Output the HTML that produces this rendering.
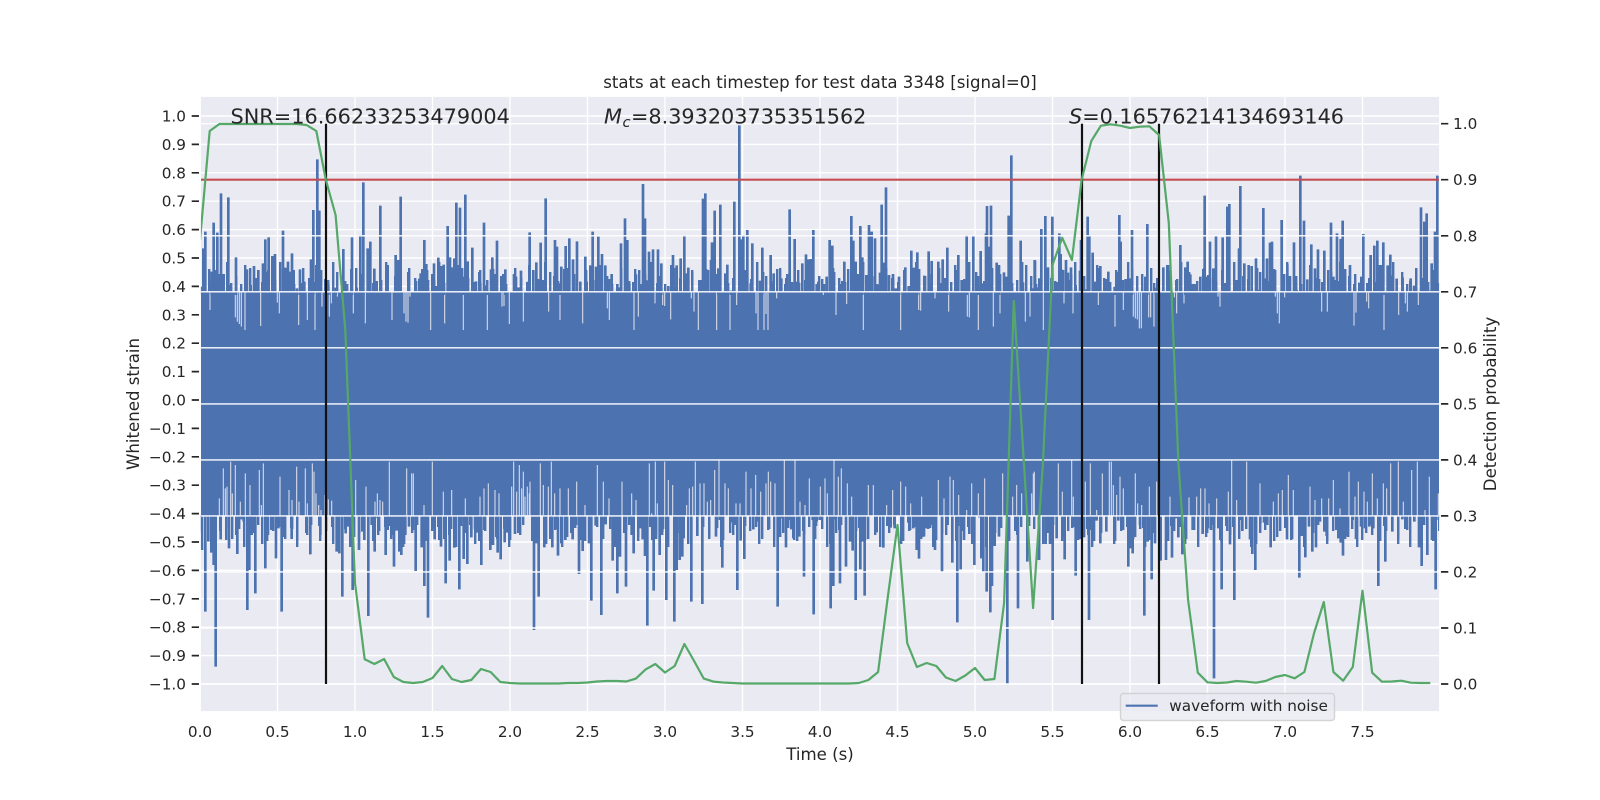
<!DOCTYPE html>
<html>
<head>
<meta charset="utf-8">
<title>stats</title>
<style>
html,body{margin:0;padding:0;background:#fff;width:1600px;height:800px;overflow:hidden}
svg{display:block}
text{font-family:"DejaVu Sans","Liberation Sans",sans-serif;fill:#262626}
.t{font-size:15.28px}
.l{font-size:16.6px}
.b{font-size:20.78px}
.blue{fill:none;stroke:#4C72B0;stroke-width:8}
.dip{fill:none;stroke:#EAEAF2;stroke-width:3.4;stroke-opacity:.85}
</style>
</head>
<body>
<svg width="1600" height="800" viewBox="0 0 1600 800" xmlns="http://www.w3.org/2000/svg">
<defs>
<clipPath id="c"><rect x="200.9" y="96.9" width="1238.2" height="614.2"/></clipPath>
<pattern id="pa" patternUnits="userSpaceOnUse" x="0" y="250" width="53" height="44">
<g fill="#4C72B0"><rect x="2" y="20" width="2.4" height="24"/><rect x="9" y="30" width="2.4" height="14"/><rect x="14" y="12" width="2.4" height="32"/><rect x="23" y="26" width="2.4" height="18"/><rect x="28" y="34" width="2.4" height="10"/><rect x="37" y="18" width="2.4" height="26"/><rect x="43" y="28" width="2.4" height="16"/><rect x="49" y="32" width="2.4" height="12"/></g>
</pattern>
<pattern id="pb" patternUnits="userSpaceOnUse" x="0" y="250" width="71" height="44">
<g fill="#4C72B0"><rect x="5" y="24" width="2.4" height="20"/><rect x="17" y="33" width="2.4" height="11"/><rect x="31" y="15" width="2.4" height="29"/><rect x="40" y="29" width="2.4" height="15"/><rect x="52" y="22" width="2.4" height="22"/><rect x="60" y="31" width="2.4" height="13"/><rect x="66" y="19" width="2.4" height="25"/></g>
</pattern>
</defs>
<rect width="1600" height="800" fill="#fff"/>
<rect x="200.9" y="96.9" width="1238.2" height="614.2" fill="#EAEAF2"/>

<!-- grid under the data -->
<path fill="none" stroke="#fff" stroke-width="1.39" d="M277.5 97V711M355 97V711M432.5 97V711M510 97V711M587.5 97V711M665 97V711M742.5 97V711M820 97V711M897.5 97V711M975 97V711M1052.5 97V711M1130 97V711M1207.5 97V711M1285 97V711M1362.5 97V711M201 116H1439M201 144.4H1439M201 172.8H1439M201 201.2H1439M201 229.6H1439M201 258H1439M201 286.4H1439M201 314.8H1439M201 343.2H1439M201 371.6H1439M201 400H1439M201 428.4H1439M201 456.8H1439M201 485.2H1439M201 513.6H1439M201 542H1439M201 570.4H1439M201 598.8H1439M201 627.2H1439M201 655.6H1439M201 684H1439"/>

<g clip-path="url(#c)">
<rect x="201" y="292.5" width="1238" height="224" fill="#4C72B0"/>
<!-- dense low columns just outside the solid band -->
<rect x="180" y="250" width="1280" height="44" fill="url(#pa)"/>
<rect x="180" y="250" width="1280" height="44" fill="url(#pb)"/>
<g transform="translate(17,809) scale(1,-1)">
<rect x="160" y="250" width="1280" height="44" fill="url(#pa)"/>
<rect x="160" y="250" width="1280" height="44" fill="url(#pb)"/>
</g>

<!-- top band, part 1 -->
<g transform="translate(200,180) scale(.33333)">
<path class="dip" d="M30 338V390M106 338V412M112 338V425M118 338V432M124 338V440M135 338V450M182 338V438M232 338V368M238 338V400M296 338V435M322 338V420M345 338V450M366 338V380M388 338V410M394 338V370M412 338V350M460 338V400M496 338V430M576 338V420M612 338V400M618 338V425M624 338V428M630 338V350M692 338V450M734 338V430M790 338V450M862 338V450M906 338V380M912 338V378M928 338V432M970 338V425M1046 338V395M1080 338V420M1148 338V430M1222 338V385M1228 338V420"/>
<path class="blue" d="M3 320V345M10 205V345M16 155V345M35 275V345M41 128V345M52 158V345M63 40V345M71 282V345M85 52V345M92 315V345M108 232V345M141 268V345M152 315V345M162 258V345M167 310V345M175 270V345M189 250V345M196 178V345M206 172V345M217 228V345M225 222V345M249 152V345M256 263V345M264 245V345M269 275V345M276 220V345M281 270V345M291 325V345M300 268V345M313 305V345M333 238V345M340 90V345M352 -62V345M358 92V345M385 314V345M407 323V345M430 207V345M456 172V345M470 323V345M481 165V345M490 7V345M503 205V345M511 185V345M523 266V345M530 303V345M541 77V345M563 255V345M587 225V345M594 240V345M602 50V345M658 296V345M662 280V345M673 180V345M679 252V345M684 300V345M702 250V345M708 318V345M715 233V345M723 258V345M731 254V345M743 138V345M750 232V345M757 262V345M763 235V345M769 68V345M780 83V345M789 290V345M796 44V345M803 244V345M817 203V345M828 304V345M841 310V345M852 128V345M860 316V345M873 268V345M877 232V345M883 282V345M891 182V345M916 268V345M942 282V345M948 290V345M955 322V345M963 272V345M985 305V345M989 157V345M1000 271V345M1009 247V345M1022 188V345M1030 300V345M1037 55V345M1065 180V345M1071 200V345M1077 310V345M1084 260V345M1097 198V345M1108 175V345M1119 238V345M1131 184V345M1141 305V345M1156 230V345M1160 305V345M1171 256V345M1178 155V345M1188 260V345M1195 170V345M1206 222V345M1216 256V345M1235 282V345M1252 312V345M1258 322V345"/>
</g>

<!-- top band, part 2 -->
<g transform="translate(620,180) scale(.33333)">
<path class="dip" d="M42 338V450M55 338V410M105 338V370M128 338V375M134 338V378M152 338V418M214 338V355M222 338V395M235 338V450M290 338V450M330 338V450M350 338V375M408 338V400M414 338V450M432 338V450M438 338V402M444 338V450M470 338V355M610 338V345M648 338V405M680 338V372M730 338V450M842 338V450M896 338V390M902 338V392M945 338V355M986 338V395M1042 338V410M1048 338V412M1075 338V450M1120 338V440M1140 338V400M1216 338V425M1230 338V410"/>
<path class="blue" d="M3 190V345M15 115V345M22 180V345M28 310V345M48 283V345M63 312V345M69 12V345M75 115V345M80 303V345M87 215V345M93 295V345M99 208V345M114 208V345M124 250V345M145 318V345M159 225V345M164 320V345M170 256V345M182 235V345M193 165V345M198 280V345M205 263V345M241 300V345M249 56V345M256 40V345M264 270V345M273 240V345M276 187V345M284 92V345M295 265V345M301 74V345M316 280V345M322 254V345M333 332V345M343 65V345M358 -164V345M364 178V345M370 165V345M382 150V345M392 310V345M397 190V345M420 302V345M427 203V345M452 225V345M461 280V345M484 295V345M496 312V345M509 88V345M524 177V345M531 305V345M535 305V345M547 250V345M558 223V345M564 238V345M572 237V345M580 150V345M590 312V345M595 305V345M620 290V345M629 180V345M637 197V345M662 312V345M673 245V345M694 108V345M700 182V345M707 245V345M721 138V345M727 232V345M739 285V345M747 135V345M755 155V345M765 175V345M773 315V345M780 278V345M785 74V345M791 248V345M798 22V345M807 285V345M819 282V345M827 325V345M837 290V345M856 262V345M866 318V345M874 212V345M881 263V345M892 217V345M913 287V345M926 214V345M935 243V345M955 245V345M968 238V345M982 203V345M1008 288V345M1015 225V345M1025 300V345M1032 330V345M1040 165V345M1060 168V345M1074 323V345M1082 213V345M1090 310V345M1098 160V345M1101 78V345M1108 200V345M1113 77V345M1130 248V345M1137 255V345M1152 277V345M1158 290V345M1166 107V345M1174 -74V345M1202 182V345M1209 307V345M1240 325V345M1245 242V345M1258 295V345"/>
</g>

<!-- top band, part 3 -->
<g transform="translate(1030,180) scale(.33333)">
<path class="dip" d="M40 338V450M102 338V370M129 338V400M205 338V375M255 338V440M280 338V390M310 338V410M316 338V415M322 338V418M328 338V445M334 338V445M356 338V412M362 338V412M372 338V440M433 338V352M440 338V400M462 338V370M564 338V350M570 338V380M736 338V350M742 338V400M748 338V430M764 338V352M875 338V395M892 338V395M972 338V437M978 338V398M1010 338V365M1016 338V385M1062 338V450M1106 338V405M1126 338V370M1132 338V395M1165 338V375"/>
<path class="blue" d="M8 325V345M14 240V345M20 322V345M30 295V345M34 147V345M46 108V345M54 262V345M67 110V345M75 330V345M88 160V345M92 222V345M108 240V345M114 278V345M123 262V345M137 315V345M150 272V345M153 180V345M165 328V345M173 110V345M178 165V345M188 218V345M195 305V345M211 258V345M235 275V345M240 322V345M254 320V345M268 105V345M272 185V345M287 297V345M300 295V345M306 150V345M346 290V345M352 132V345M377 323V345M400 262V345M412 255V345M451 195V345M466 262V345M473 245V345M481 283V345M488 312V345M511 290V345M524 47V345M528 290V345M535 285V345M540 185V345M550 265V345M558 168V345M578 172V345M592 80V345M598 72V345M619 300V345M627 205V345M631 18V345M643 250V345M656 255V345M665 258V345M678 235V345M685 330V345M700 84V345M706 295V345M711 235V345M720 188V345M726 185V345M755 120V345M772 253V345M780 288V345M792 187V345M800 330V345M811 -13V345M822 122V345M832 298V345M844 193V345M855 265V345M864 208V345M883 212V345M903 128V345M910 290V345M921 160V345M932 177V345M938 122V345M945 283V345M960 255V345M988 308V345M994 290V345M1000 162V345M1022 225V345M1033 197V345M1042 182V345M1050 255V345M1060 187V345M1073 256V345M1081 224V345M1086 287V345M1100 296V345M1118 293V345M1142 295V345M1152 317V345M1173 82V345M1183 125V345M1190 100V345M1197 332V345M1205 250V345M1215 155V345M1222 -13V345"/>
</g>

<!-- bottom band, part 1 -->
<g transform="translate(200,460) scale(.33333)">
<path class="dip" d="M58 115V170M70 25V170M76 85V170M81 80V170M92 5V170M97 100V170M106 15V170M121 125V170M136 40V170M150 75V170M178 30V170M184 135V170M190 10V170M240 50V170M267 90V170M276 120V170M290 20V170M297 125V170M316 25V170M322 130V170M337 10V170M342 35V170M348 100V170M356 135V170M363 150V170M375 105V170M385 118V170M395 122V170M400 165V170M467 60V170M498 80V170M525 125V170M532 100V170M540 120V170M548 125V170M568 5V170M620 25V170M635 40V170M640 40V170M672 135V170M697 5V170M730 95V170M755 90V170M796 115V170M840 110V170M852 85V170M865 70V170M885 90V170M897 100V170M935 80V170M941 5V170M950 95V170M958 15V170M965 85V170M970 35V170M975 110V170M982 80V170M988 100V170M990 65V170M1021 10V170M1030 75V170M1045 80V170M1054 5V170M1064 100V170M1080 85V170M1105 85V170M1130 65V170M1155 135V170M1192 15V170M1210 65V170M1227 115V170"/>
<path class="blue" d="M6 165V270M16 165V455M25 165V245M34 165V278M41 165V315M47 165V620M62 165V238M87 165V265M112 165V282M125 165V178M131 165V185M142 165V450M148 165V330M155 165V225M166 165V400M196 165V325M204 165V225M215 165V205M228 165V295M235 165V205M245 165V455M252 165V180M275 165V237M331 165V283M361 165V225M410 165V275M418 165V280M427 165V410M437 165V220M445 165V200M458 165V390M477 165V270M487 165V215M493 165V240M505 165V468M515 165V195M524 165V275M533 165V175M557 165V285M563 165V210M574 165V225M582 165V320M590 165V212M598 165V275M604 165V285M616 165V225M627 165V200M647 165V333M665 165V262M673 165V378M684 165V473M704 165V238M723 165V260M737 165V370M749 165V302M763 165V263M778 165V388M791 165V297M802 165V312M814 165V232M825 165V208M830 165V218M844 165V315M871 165V270M879 165V255M893 165V278M902 165V298M914 165V247M922 165V218M929 165V198M945 165V222M1002 165V510M1008 165V250M1016 165V410M1033 165V262M1057 165V262M1074 165V287M1084 165V250M1096 165V240M1118 165V238M1137 165V342M1148 165V273M1167 165V250M1174 165V422M1187 165V197M1204 165V465M1217 165V193M1238 165V302M1252 165V400M1258 165V290"/>
</g>

<!-- bottom band, part 2 -->
<g transform="translate(620,460) scale(.33333)">
<path class="dip" d="M6 65V170M35 100V170M48 120V170M88 10V170M95 160V170M106 5V170M112 130V170M134 5V170M145 60V170M158 75V170M188 165V170M200 135V170M208 85V170M218 80V170M226 5V170M240 70V170M252 70V170M262 125V170M272 120V170M284 30V170M297 0V170M315 70V170M325 85V170M348 130V170M360 130V170M378 35V170M393 85V170M407 45V170M422 95V170M438 70V170M445 35V170M452 65V170M465 70V170M493 0V170M525 0V170M540 125V170M555 135V170M568 55V170M601 80V170M615 55V170M622 100V170M642 0V170M655 50V170M664 25V170M682 70V170M695 110V170M745 75V170M760 75V170M800 135V170M818 90V170M842 65V170M857 80V170M872 130V170M905 110V170M955 60V170M972 115V170M990 50V170M1000 60V170M1016 105V170M1040 150V170M1055 70V170M1075 100V170M1094 55V170M1148 40V170M1178 110V170M1190 75V170M1205 100V170M1240 40V170"/>
<path class="blue" d="M0 165V290M18 165V380M28 165V178M35 165V225M41 165V280M62 165V205M68 165V238M75 165V288M82 165V497M101 165V392M108 165V220M119 165V285M127 165V215M139 165V420M163 165V485M170 165V330M179 165V300M187 165V290M191 165V235M214 165V425M232 165V228M247 165V432M288 165V230M300 165V180M307 165V323M333 165V187M340 165V175M352 165V390M362 165V242M373 165V297M400 165V208M412 165V185M473 165V440M479 165V218M485 165V175M498 165V262M508 165V180M514 165V208M520 165V235M538 165V230M552 165V350M578 165V180M581 165V463M590 165V185M599 165V180M632 165V445M640 165V378M648 165V178M660 165V370M678 165V320M690 165V245M698 165V272M707 165V420M721 165V328M727 165V245M734 165V407M770 165V217M790 165V263M812 165V203M824 165V205M845 165V175M865 165V188M880 165V205M890 165V270M897 165V296M912 165V230M918 165V205M930 165V193M938 165V195M945 165V270M966 165V335M983 165V195M997 165V308M1012 165V487M1022 165V328M1032 165V240M1048 165V222M1063 165V315M1078 165V172M1084 165V295M1090 165V335M1100 165V395M1111 165V457M1116 165V378M1124 165V258M1137 165V230M1152 165V170M1162 165V672M1194 165V445M1222 165V305M1257 165V300"/>
</g>

<!-- bottom band, part 3 -->
<g transform="translate(1030,460) scale(.33333)">
<path class="dip" d="M5 100V170M13 35V170M85 10V170M97 95V170M125 0V170M130 110V170M166 65V170M181 10V170M200 150V170M217 40V170M238 5V170M244 5V170M250 75V170M260 105V170M270 50V170M280 85V170M316 40V170M323 130V170M335 135V170M358 80V170M380 65V170M420 110V170M477 112V170M500 110V170M512 85V170M525 85V170M537 130V170M560 115V170M595 95V170M605 0V170M620 120V170M650 5V170M690 70V170M730 125V170M745 100V170M757 90V170M775 45V170M790 90V170M840 80V170M855 120V170M875 115V170M896 115V170M910 60V170M930 145V170M957 35V170M975 110V170M985 65V170M1002 95V170M1012 125V170M1027 40V170M1042 115V170M1060 70V170M1070 85V170M1082 10V170M1105 5V170M1120 125V170M1145 30V170M1162 5V170M1185 150V170M1198 50V170M1225 100V170"/>
<path class="blue" d="M27 165V298M47 165V252M60 165V252M68 165V480M80 165V235M104 165V298M124 165V170M137 165V347M145 165V210M162 165V232M177 165V480M185 165V210M192 165V243M200 165V182M211 165V250M229 165V215M265 165V182M295 165V320M302 165V265M308 165V280M330 165V195M343 165V467M353 165V245M365 165V358M375 165V250M392 165V302M408 165V300M426 165V293M437 165V175M445 165V232M457 165V283M488 165V210M518 165V222M534 165V205M543 165V210M552 165V655M565 165V205M575 165V388M589 165V198M600 165V253M613 165V420M630 165V180M637 165V213M660 165V238M667 165V282M676 165V330M691 165V190M702 165V188M712 165V195M722 165V262M771 165V238M808 165V353M815 165V228M826 165V292M837 165V200M847 165V275M858 165V262M870 165V185M883 165V215M890 165V228M925 165V235M932 165V248M939 165V287M947 165V230M968 165V180M978 165V237M993 165V200M1005 165V205M1018 165V200M1030 165V205M1045 165V378M1066 165V305M1087 165V215M1117 165V178M1127 165V203M1153 165V185M1167 165V262M1175 165V318M1192 165V285M1206 165V240M1217 165V388M1226 165V180"/>
</g>

<!-- grid of the twin axis, over the waveform -->
<path fill="none" stroke="#fff" stroke-width="1.39" d="M201 123.7H1439M201 179.7H1439M201 235.8H1439M201 291.8H1439M201 347.8H1439M201 403.9H1439M201 459.9H1439M201 515.9H1439M201 571.9H1439M201 628H1439M201 684H1439"/>
<!-- threshold -->
<path fill="none" stroke="#C44E52" stroke-width="2.2" d="M201 179.7H1439"/>
<!-- event markers -->
<path fill="none" stroke="#111" stroke-width="2.2" d="M326 123.7V684M1082 123.7V684M1159 123.7V684"/>
<!-- detection probability -->
<polyline fill="none" stroke="#55A868" stroke-width="2.2" stroke-linejoin="round" points="200,240 209.7,131 219.4,124 229.1,124 238.8,124 248.4,124 258.1,124 267.8,124 277.5,124 287.2,124 296.9,124 306.6,125 316.3,131 325.9,180 335.6,215 345.3,330 355,583 364.7,659.3 374.4,664 384.1,659 393.8,677 403.4,682 413.1,683 422.8,682 432.5,678 442.2,666 451.9,679 461.6,682 471.3,680 480.9,669 490.6,672 500.3,682 510,683 519.7,683.5 529.4,683.5 539.1,683.5 548.8,683.5 558.4,683.5 568.1,683 577.8,683 587.5,682.5 597.2,681.5 606.9,681 616.6,681 626.3,681.5 635.9,678.6 645.6,669.4 655.3,664 665,672.5 674.7,666 684.4,644 694.1,661 703.8,678.6 713.4,681.6 723.1,682.5 732.8,683 742.5,683.5 752.2,683.5 761.9,683.5 771.6,683.5 781.3,683.5 790.9,683.5 800.6,683.5 810.3,683.5 820,683.5 829.7,683.5 839.4,683.5 849.1,683.5 858.8,683 868.4,680 878.1,672 887.8,597 897.5,525 907.2,643 916.9,667 926.6,663 936.3,666 945.9,677.5 955.6,681 965.3,675.5 975,668 984.7,680 994.4,679 1004.1,603 1013.8,301 1023.4,455 1033.1,608 1042.8,465 1052.5,265 1062.2,237.7 1071.9,260 1081.6,180 1091.3,141 1100.9,125.7 1110.6,124.3 1120.3,125.7 1130,128 1139.7,126.7 1149.4,126.3 1159.1,135 1168.8,223 1178.4,463 1188.1,600 1197.8,672.7 1207.5,682.3 1217.2,683 1226.9,682.5 1236.6,681 1246.3,681.7 1255.9,682.7 1265.6,681 1275.3,677 1285,675 1294.7,678.3 1304.4,672 1314.1,633 1323.8,602 1333.4,672 1343.1,680.7 1352.8,667 1362.5,590.7 1372.2,672.7 1381.9,681.7 1391.6,681.5 1401.3,680.7 1410.9,682.7 1420.6,683 1430.3,683"/>
</g>

<!-- ticks -->
<path fill="none" stroke="#262626" stroke-width="1.7" d="M191.7 116H199M191.7 144.4H199M191.7 172.8H199M191.7 201.2H199M191.7 229.6H199M191.7 258H199M191.7 286.4H199M191.7 314.8H199M191.7 343.2H199M191.7 371.6H199M191.7 400H199M191.7 428.4H199M191.7 456.8H199M191.7 485.2H199M191.7 513.6H199M191.7 542H199M191.7 570.4H199M191.7 598.8H199M191.7 627.2H199M191.7 655.6H199M191.7 684H199M1441 123.7H1448.3M1441 179.7H1448.3M1441 235.8H1448.3M1441 291.8H1448.3M1441 347.8H1448.3M1441 403.9H1448.3M1441 459.9H1448.3M1441 515.9H1448.3M1441 571.9H1448.3M1441 628H1448.3M1441 684H1448.3"/>

<!-- left tick labels -->
<g text-anchor="end">
<text class="t" x="186" y="121.5">1.0</text>
<text class="t" x="186" y="149.9">0.9</text>
<text class="t" x="186" y="178.3">0.8</text>
<text class="t" x="186" y="206.7">0.7</text>
<text class="t" x="186" y="235.1">0.6</text>
<text class="t" x="186" y="263.5">0.5</text>
<text class="t" x="186" y="291.9">0.4</text>
<text class="t" x="186" y="320.3">0.3</text>
<text class="t" x="186" y="348.7">0.2</text>
<text class="t" x="186" y="377.1">0.1</text>
<text class="t" x="186" y="405.5">0.0</text>
<text class="t" x="186" y="433.9">−0.1</text>
<text class="t" x="186" y="462.3">−0.2</text>
<text class="t" x="186" y="490.7">−0.3</text>
<text class="t" x="186" y="519.1">−0.4</text>
<text class="t" x="186" y="547.5">−0.5</text>
<text class="t" x="186" y="575.9">−0.6</text>
<text class="t" x="186" y="604.3">−0.7</text>
<text class="t" x="186" y="632.7">−0.8</text>
<text class="t" x="186" y="661.1">−0.9</text>
<text class="t" x="186" y="689.5">−1.0</text>
</g>

<!-- right tick labels -->
<g>
<text class="t" x="1453" y="129.2">1.0</text>
<text class="t" x="1453" y="185.2">0.9</text>
<text class="t" x="1453" y="241.3">0.8</text>
<text class="t" x="1453" y="297.3">0.7</text>
<text class="t" x="1453" y="353.3">0.6</text>
<text class="t" x="1453" y="409.4">0.5</text>
<text class="t" x="1453" y="465.4">0.4</text>
<text class="t" x="1453" y="521.4">0.3</text>
<text class="t" x="1453" y="577.4">0.2</text>
<text class="t" x="1453" y="633.5">0.1</text>
<text class="t" x="1453" y="689.5">0.0</text>
</g>

<!-- bottom tick labels -->
<g text-anchor="middle">
<text class="t" x="200" y="737">0.0</text>
<text class="t" x="277.5" y="737">0.5</text>
<text class="t" x="355" y="737">1.0</text>
<text class="t" x="432.5" y="737">1.5</text>
<text class="t" x="510" y="737">2.0</text>
<text class="t" x="587.5" y="737">2.5</text>
<text class="t" x="665" y="737">3.0</text>
<text class="t" x="742.5" y="737">3.5</text>
<text class="t" x="820" y="737">4.0</text>
<text class="t" x="897.5" y="737">4.5</text>
<text class="t" x="975" y="737">5.0</text>
<text class="t" x="1052.5" y="737">5.5</text>
<text class="t" x="1130" y="737">6.0</text>
<text class="t" x="1207.5" y="737">6.5</text>
<text class="t" x="1285" y="737">7.0</text>
<text class="t" x="1362.5" y="737">7.5</text>
</g>

<!-- axis labels and title -->
<text class="l" x="820" y="760" text-anchor="middle">Time (s)</text>
<text class="l" text-anchor="middle" transform="translate(139,404) rotate(-90)">Whitened strain</text>
<text class="l" text-anchor="middle" transform="translate(1496,404) rotate(-90)">Detection probability</text>
<text class="l" x="820" y="88" text-anchor="middle">stats at each timestep for test data 3348 [signal=0]</text>

<!-- annotations -->
<text x="230.5" y="123.7" style="font-size:20.83px">SNR=16.66233253479004</text>
<text class="b" x="604" y="123.7"><tspan font-style="italic">M</tspan><tspan font-style="italic" font-size="14.6px" x="622.5" dy="3.2">c</tspan><tspan x="631" dy="-3.2">=8.393203735351562</tspan></text>
<text class="b" x="1069" y="123.7"><tspan font-style="italic">S</tspan>=0.16576214134693146</text>

<!-- legend -->
<rect x="1120.5" y="693.5" width="214" height="27" rx="3" ry="3" fill="#EAEAF2" fill-opacity=".8" stroke="#CCCCCC" stroke-opacity=".8" stroke-width="1.39"/>
<path d="M1125.7 705.7H1157.7" fill="none" stroke="#4C72B0" stroke-width="2.08"/>
<text class="t" x="1169.3" y="711">waveform with noise</text>
</svg>
</body>
</html>
